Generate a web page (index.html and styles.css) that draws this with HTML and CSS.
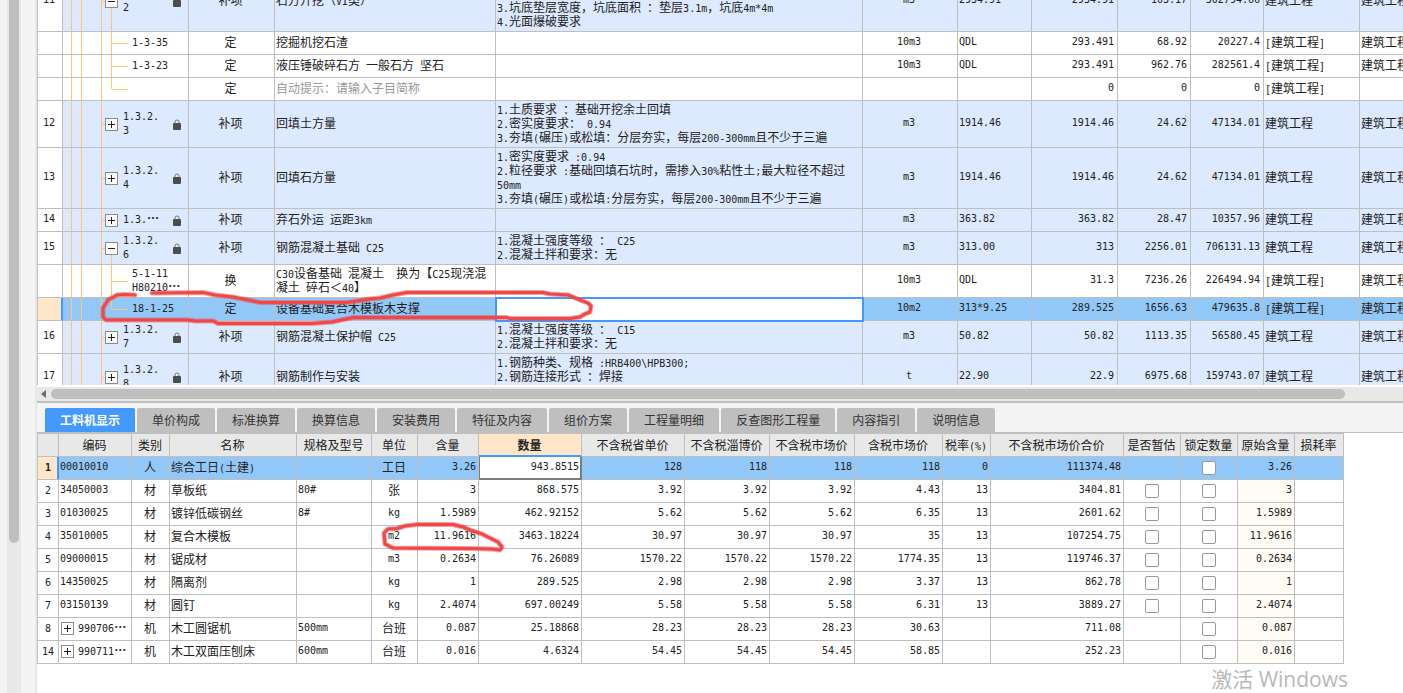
FILE: index.html
```html
<!DOCTYPE html>
<html lang="zh-CN">
<head>
<meta charset="utf-8">
<title>工程量清单计价</title>
<link rel="stylesheet" href="styles.css">
</head>
<body>
<svg class="defs" width="0" height="0" aria-hidden="true">
  <symbol id="lock" viewBox="0 0 8 11"><path d="M2 5V3a2 2 0 0 1 4 0v2" fill="none" stroke="#777" stroke-width="1"/><rect x="0" y="4" width="8" height="7" rx="1" fill="#4d4d4d"/></symbol>
  <symbol id="plus" viewBox="0 0 13 13"><rect x="0.5" y="0.5" width="12" height="12" fill="#fff" stroke="#8c8c8c"/><path d="M3 6.5h7M6.5 3v7" stroke="#222" fill="none"/></symbol>
  <symbol id="minus" viewBox="0 0 13 13"><rect x="0.5" y="0.5" width="12" height="12" fill="#fff" stroke="#8c8c8c"/><path d="M3 6.5h7" stroke="#222" fill="none"/></symbol>
</svg>
<div class="app">
  <aside class="gutter"><div class="vtrack"><div class="vthumb"></div></div></aside>
  <main class="main">
    <section class="bill">
      <table class="grid bill-grid">
        <colgroup><col class="b1"><col class="b2"><col class="b3"><col class="b4"><col class="b5"><col class="b6"><col class="b7"><col class="b8"><col class="b9"><col class="b10"><col class="b11"><col class="b12"></colgroup>
        <tbody>
        <tr class="item">
          <td class="idx n">11</td>
          <td class="tree open"><div class="node"><button class="tog" aria-label="收起"><svg><use href="#minus"/></svg></button><span class="code n">1.3.2.<br>2</span><svg class="lock"><use href="#lock"/></svg></div></td>
          <td class="c">补项</td><td>石方开挖（<span class="n">VI</span>类）</td>
          <td><br><br><span class="n">3.</span>坑底垫层宽度，坑底面积<span class="n"> </span>：垫层<span class="n">3.1m</span>，坑底<span class="n">4m*4m</span><br><span class="n">4.</span>光面爆破要求</td>
          <td class="c n">m3</td><td class="n">2934.91</td><td class="r n">2934.91</td><td class="r n">103.17</td><td class="r n">302794.66</td><td>建筑工程</td><td>建筑工程</td>
        </tr>
        <tr>
          <td class="idx n"></td><td class="tree child"><div class="leaf n">1-3-35</div></td>
          <td class="c">定</td><td>挖掘机挖石渣</td><td></td>
          <td class="c n">10m3</td><td class="n">QDL</td><td class="r n">293.491</td><td class="r n">68.92</td><td class="r n">20227.4</td><td><span class="n">[</span>建筑工程<span class="n">]</span></td><td>建筑工程</td>
        </tr>
        <tr>
          <td class="idx n"></td><td class="tree child"><div class="leaf n">1-3-23</div></td>
          <td class="c">定</td><td>液压锤破碎石方<span class="n"> </span>一般石方<span class="n"> </span>坚石</td><td></td>
          <td class="c n">10m3</td><td class="n">QDL</td><td class="r n">293.491</td><td class="r n">962.76</td><td class="r n">282561.4</td><td><span class="n">[</span>建筑工程<span class="n">]</span></td><td>建筑工程</td>
        </tr>
        <tr>
          <td class="idx n"></td><td class="tree child last"></td>
          <td class="c">定</td><td class="hint">自动提示：请输入子目简称</td><td></td>
          <td></td><td></td><td class="r n">0</td><td class="r n">0</td><td class="r n">0</td><td><span class="n">[</span>建筑工程<span class="n">]</span></td><td></td>
        </tr>
        <tr class="item">
          <td class="idx n">12</td>
          <td class="tree"><div class="node"><button class="tog" aria-label="展开"><svg><use href="#plus"/></svg></button><span class="code n">1.3.2.<br>3</span><svg class="lock"><use href="#lock"/></svg></div></td>
          <td class="c">补项</td><td>回填土方量</td>
          <td><span class="n">1.</span>土质要求<span class="n"> </span>：基础开挖余土回填<br><span class="n">2.</span>密实度要求：<span class="n"> 0.94</span><br><span class="n">3.</span>夯填<span class="n">(</span>碾压<span class="n">)</span>或松填：分层夯实，每层<span class="n">200-300mm</span>且不少于三遍</td>
          <td class="c n">m3</td><td class="n">1914.46</td><td class="r n">1914.46</td><td class="r n">24.62</td><td class="r n">47134.01</td><td>建筑工程</td><td>建筑工程</td>
        </tr>
        <tr class="item">
          <td class="idx n">13</td>
          <td class="tree"><div class="node"><button class="tog" aria-label="展开"><svg><use href="#plus"/></svg></button><span class="code n">1.3.2.<br>4</span><svg class="lock"><use href="#lock"/></svg></div></td>
          <td class="c">补项</td><td>回填石方量</td>
          <td><span class="n">1.</span>密实度要求<span class="n"> :0.94</span><br><span class="n">2.</span>粒径要求<span class="n"> :</span>基础回填石坑时，需掺入<span class="n">30%</span>粘性土<span class="n">;</span>最大粒径不超过<br><span class="n">50mm</span><br><span class="n">3.</span>夯填<span class="n">(</span>碾压<span class="n">)</span>或松填<span class="n">:</span>分层夯实，每层<span class="n">200-300mm</span>且不少于三遍</td>
          <td class="c n">m3</td><td class="n">1914.46</td><td class="r n">1914.46</td><td class="r n">24.62</td><td class="r n">47134.01</td><td>建筑工程</td><td>建筑工程</td>
        </tr>
        <tr class="item">
          <td class="idx n">14</td>
          <td class="tree"><div class="node"><button class="tog" aria-label="展开"><svg><use href="#plus"/></svg></button><span class="code n">1.3.<b class="dots">…</b></span><svg class="lock"><use href="#lock"/></svg></div></td>
          <td class="c">补项</td><td>弃石外运<span class="n"> </span>运距<span class="n">3km</span></td><td></td>
          <td class="c n">m3</td><td class="n">363.82</td><td class="r n">363.82</td><td class="r n">28.47</td><td class="r n">10357.96</td><td>建筑工程</td><td>建筑工程</td>
        </tr>
        <tr class="item">
          <td class="idx n">15</td>
          <td class="tree open"><div class="node"><button class="tog" aria-label="收起"><svg><use href="#minus"/></svg></button><span class="code n">1.3.2.<br>6</span><svg class="lock"><use href="#lock"/></svg></div></td>
          <td class="c">补项</td><td>钢筋混凝土基础<span class="n"> C25</span></td>
          <td><span class="n">1.</span>混凝土强度等级<span class="n"> </span>：<span class="n"> C25</span><br><span class="n">2.</span>混凝土拌和要求：无</td>
          <td class="c n">m3</td><td class="n">313.00</td><td class="r n">313</td><td class="r n">2256.01</td><td class="r n">706131.13</td><td>建筑工程</td><td>建筑工程</td>
        </tr>
        <tr>
          <td class="idx n"></td><td class="tree child"><div class="leaf n">5-1-11<br>H80210<b class="dots">…</b></div></td>
          <td class="c">换</td><td><span class="n">C30</span>设备基础<span class="n"> </span>混凝土<span class="n">&nbsp; </span>换为【<span class="n">C25</span>现浇混<br>凝土<span class="n"> </span>碎石＜<span class="n">40</span>】</td><td></td>
          <td class="c n">10m3</td><td class="n">QDL</td><td class="r n">31.3</td><td class="r n">7236.26</td><td class="r n">226494.94</td><td><span class="n">[</span>建筑工程<span class="n">]</span></td><td>建筑工程</td>
        </tr>
        <tr class="sel">
          <td class="idx n"></td><td class="tree child last"><div class="leaf n">18-1-25</div></td>
          <td class="c">定</td><td>设备基础复合木模板木支撑</td><td class="edit"><input class="cell-input" type="text" aria-label="项目特征"></td>
          <td class="c n">10m2</td><td class="n">313*9.25</td><td class="r n">289.525</td><td class="r n">1656.63</td><td class="r n">479635.8</td><td><span class="n">[</span>建筑工程<span class="n">]</span></td><td>建筑工程</td>
        </tr>
        <tr class="item">
          <td class="idx n">16</td>
          <td class="tree"><div class="node"><button class="tog" aria-label="展开"><svg><use href="#plus"/></svg></button><span class="code n">1.3.2.<br>7</span><svg class="lock"><use href="#lock"/></svg></div></td>
          <td class="c">补项</td><td>钢筋混凝土保护帽<span class="n"> C25</span></td>
          <td><span class="n">1.</span>混凝土强度等级<span class="n"> </span>：<span class="n"> C15</span><br><span class="n">2.</span>混凝土拌和要求：无</td>
          <td class="c n">m3</td><td class="n">50.82</td><td class="r n">50.82</td><td class="r n">1113.35</td><td class="r n">56580.45</td><td>建筑工程</td><td>建筑工程</td>
        </tr>
        <tr class="item">
          <td class="idx n">17</td>
          <td class="tree"><div class="node"><button class="tog" aria-label="展开"><svg><use href="#plus"/></svg></button><span class="code n">1.3.2.<br>8</span><svg class="lock"><use href="#lock"/></svg></div></td>
          <td class="c">补项</td><td>钢筋制作与安装</td>
          <td><span class="n">1.</span>钢筋种类、规格<span class="n"> :HRB400\HPB300;</span><br><span class="n">2.</span>钢筋连接形式<span class="n"> </span>：焊接<br>&nbsp;</td>
          <td class="c n">t</td><td class="n">22.90</td><td class="r n">22.9</td><td class="r n">6975.68</td><td class="r n">159743.07</td><td>建筑工程</td><td>建筑工程</td>
        </tr>
        </tbody>
      </table>
    </section>
    <div class="htrack"><svg class="arrow" viewBox="0 0 5 8"><path d="M5 0v8L0 4z" fill="#6b6b75"/></svg><div class="hthumb"></div></div>
    <section class="detail">
      <nav class="tabs">
        <button class="tab active">工料机显示</button><button class="tab">单价构成</button><button class="tab">标准换算</button><button class="tab">换算信息</button><button class="tab">安装费用</button><button class="tab">特征及内容</button><button class="tab">组价方案</button><button class="tab">工程量明细</button><button class="tab">反查图形工程量</button><button class="tab">内容指引</button><button class="tab">说明信息</button>
      </nav>
      <table class="grid detail-grid">
        <colgroup><col class="d1"><col class="d2"><col class="d3"><col class="d4"><col class="d5"><col class="d6"><col class="d7"><col class="d8"><col class="d9"><col class="d10"><col class="d11"><col class="d12"><col class="d13"><col class="d14"><col class="d15"><col class="d16"><col class="d17"><col class="d18"></colgroup>
        <thead><tr><th></th><th>编码</th><th>类别</th><th>名称</th><th>规格及型号</th><th>单位</th><th>含量</th><th class="hot">数量</th><th>不含税省单价</th><th>不含税淄博价</th><th>不含税市场价</th><th>含税市场价</th><th>税率<span class="n">(%)</span></th><th>不含税市场价合价</th><th>是否暂估</th><th>锁定数量</th><th>原始含量</th><th>损耗率</th></tr></thead>
        <tbody>
        <tr class="sel"><td class="idx n">1</td><td class="n">00010010</td><td class="c">人</td><td>综合工日<span class="n">(</span>土建<span class="n">)</span></td><td></td><td class="c">工日</td><td class="r n">3.26</td><td class="r n focus">943.8515</td><td class="r n">128</td><td class="r n">118</td><td class="r n">118</td><td class="r n">118</td><td class="r n">0</td><td class="r n">111374.48</td><td></td><td class="c"><input type="checkbox" aria-label="锁定数量"></td><td class="r n">3.26</td><td></td></tr>
        <tr><td class="idx n">2</td><td class="n">34050003</td><td class="c">材</td><td>草板纸</td><td class="n">80#</td><td class="c">张</td><td class="r n">3</td><td class="r n">868.575</td><td class="r n">3.92</td><td class="r n">3.92</td><td class="r n">3.92</td><td class="r n">4.43</td><td class="r n">13</td><td class="r n">3404.81</td><td class="c"><input type="checkbox" aria-label="是否暂估"></td><td class="c"><input type="checkbox" aria-label="锁定数量"></td><td class="r n orig">3</td><td></td></tr>
        <tr><td class="idx n">3</td><td class="n">01030025</td><td class="c">材</td><td>镀锌低碳钢丝</td><td class="n">8#</td><td class="c n">kg</td><td class="r n">1.5989</td><td class="r n">462.92152</td><td class="r n">5.62</td><td class="r n">5.62</td><td class="r n">5.62</td><td class="r n">6.35</td><td class="r n">13</td><td class="r n">2601.62</td><td class="c"><input type="checkbox" aria-label="是否暂估"></td><td class="c"><input type="checkbox" aria-label="锁定数量"></td><td class="r n orig">1.5989</td><td></td></tr>
        <tr><td class="idx n">4</td><td class="n">35010005</td><td class="c">材</td><td>复合木模板</td><td></td><td class="c n">m2</td><td class="r n">11.9616</td><td class="r n">3463.18224</td><td class="r n">30.97</td><td class="r n">30.97</td><td class="r n">30.97</td><td class="r n">35</td><td class="r n">13</td><td class="r n">107254.75</td><td class="c"><input type="checkbox" aria-label="是否暂估"></td><td class="c"><input type="checkbox" aria-label="锁定数量"></td><td class="r n orig">11.9616</td><td></td></tr>
        <tr><td class="idx n">5</td><td class="n">09000015</td><td class="c">材</td><td>锯成材</td><td></td><td class="c n">m3</td><td class="r n">0.2634</td><td class="r n">76.26089</td><td class="r n">1570.22</td><td class="r n">1570.22</td><td class="r n">1570.22</td><td class="r n">1774.35</td><td class="r n">13</td><td class="r n">119746.37</td><td class="c"><input type="checkbox" aria-label="是否暂估"></td><td class="c"><input type="checkbox" aria-label="锁定数量"></td><td class="r n orig">0.2634</td><td></td></tr>
        <tr><td class="idx n">6</td><td class="n">14350025</td><td class="c">材</td><td>隔离剂</td><td></td><td class="c n">kg</td><td class="r n">1</td><td class="r n">289.525</td><td class="r n">2.98</td><td class="r n">2.98</td><td class="r n">2.98</td><td class="r n">3.37</td><td class="r n">13</td><td class="r n">862.78</td><td class="c"><input type="checkbox" aria-label="是否暂估"></td><td class="c"><input type="checkbox" aria-label="锁定数量"></td><td class="r n orig">1</td><td></td></tr>
        <tr><td class="idx n">7</td><td class="n">03150139</td><td class="c">材</td><td>圆钉</td><td></td><td class="c n">kg</td><td class="r n">2.4074</td><td class="r n">697.00249</td><td class="r n">5.58</td><td class="r n">5.58</td><td class="r n">5.58</td><td class="r n">6.31</td><td class="r n">13</td><td class="r n">3889.27</td><td class="c"><input type="checkbox" aria-label="是否暂估"></td><td class="c"><input type="checkbox" aria-label="锁定数量"></td><td class="r n orig">2.4074</td><td></td></tr>
        <tr><td class="idx n">8</td><td class="n"><div class="group"><button class="tog" aria-label="展开"><svg><use href="#plus"/></svg></button><span>990706<b class="dots">…</b></span></div></td><td class="c">机</td><td>木工圆锯机</td><td class="n">500mm</td><td class="c">台班</td><td class="r n">0.087</td><td class="r n">25.18868</td><td class="r n">28.23</td><td class="r n">28.23</td><td class="r n">28.23</td><td class="r n">30.63</td><td></td><td class="r n">711.08</td><td></td><td class="c"><input type="checkbox" aria-label="锁定数量"></td><td class="r n orig">0.087</td><td></td></tr>
        <tr><td class="idx n">14</td><td class="n"><div class="group"><button class="tog" aria-label="展开"><svg><use href="#plus"/></svg></button><span>990711<b class="dots">…</b></span></div></td><td class="c">机</td><td>木工双面压刨床</td><td class="n">600mm</td><td class="c">台班</td><td class="r n">0.016</td><td class="r n">4.6324</td><td class="r n">54.45</td><td class="r n">54.45</td><td class="r n">54.45</td><td class="r n">58.85</td><td></td><td class="r n">252.23</td><td></td><td class="c"><input type="checkbox" aria-label="锁定数量"></td><td class="r n orig">0.016</td><td></td></tr>
        </tbody>
      </table>
    </section>
  </main>
  <svg class="marks" width="620" height="560" viewBox="0 0 620 560" aria-hidden="true">
    <g id="ink" fill="none" stroke-linecap="round" stroke-linejoin="round">
      <path class="halo" d="M135 295L125 294.500L117 295L108 300L103 308L103 317L106 320L188 320L195 321L213 321L218 323.500L312 323.500L332 322L353 317.500L507 317.500L510 318.500L570 318.500L580 317L585 314L590 312L591 306L588 303L580 300L568 295L550 294L543 292.500L407 292.500L393 295L380 298L370 299L347 302.500L260 302.500L248 300L233 297L215 295L203 292.500L152 293M388 529L397 528.500L405 526L417 524.500L453 524.500L463 527L470 530L482 534L498 542L502 547L500 550L492 549L470 548.500L393 548L385 544L384 533Z"/>
      <path class="core" d="M135 295L125 294.500L117 295L108 300L103 308L103 317L106 320L188 320L195 321L213 321L218 323.500L312 323.500L332 322L353 317.500L507 317.500L510 318.500L570 318.500L580 317L585 314L590 312L591 306L588 303L580 300L568 295L550 294L543 292.500L407 292.500L393 295L380 298L370 299L347 302.500L260 302.500L248 300L233 297L215 295L203 292.500L152 293M388 529L397 528.500L405 526L417 524.500L453 524.500L463 527L470 530L482 534L498 542L502 547L500 550L492 549L470 548.500L393 548L385 544L384 533Z"/>
    </g>
  </svg>
  <div class="watermark">激活 Windows</div>
</div>
</body>
</html>
```
FILE: styles.css
```css
* { box-sizing: border-box; }
html, body { height: 100%; }
body {
  margin: 0;
  overflow: hidden;
  background: #f4f4f4;
  color: #222;
  font: 12px/14px "Noto Sans CJK SC", sans-serif;
}
.defs { position: absolute; }
.app { position: relative; display: flex; height: 100%; overflow: hidden; }

.gutter { flex: 0 0 37px; padding-left: 7px; border-right: 2px solid #e8e8e8; }
.vtrack { width: 14px; height: 100%; padding: 0 2px; background: #e8e8e8; }
.vthumb { height: 543px; max-height: 90%; background: #bfbfbf; border-radius: 0 0 5px 5px; }

.main { flex: 1; min-width: 0; display: flex; flex-direction: column; }
.bill { flex: 1; min-height: 0; overflow: hidden; background: #fff; }

.grid { table-layout: fixed; border-collapse: separate; border-spacing: 0; border-left: 1px solid #bfbfbf; background: #fff; }
.grid tr { height: 23px; }
.grid td, .grid th {
  padding: 1px 3px 3px 1px;
  border-right: 1px solid #bfbfbf;
  border-bottom: 1px solid #bfbfbf;
  overflow: hidden;
  white-space: nowrap;
  text-align: left;
  font-weight: 400;
}
.grid .c, .grid .idx, .grid th { text-align: center; }
.grid .r { text-align: right; }
.n { font-family: "DejaVu Sans Mono", "Noto Sans CJK SC", monospace; font-size: 10px; line-height: 10px; }
span.n { white-space: pre-wrap; }
.hint { color: #999; }

/* scrolled part-way into row 11 */
.bill-grid { width: 1403px; margin-top: -29px; }
.b1 { width: 25px; } .b2 { width: 126px; } .b3 { width: 86px; } .b4 { width: 221px; }
.b5 { width: 367px; } .b6 { width: 95px; } .b7 { width: 74px; } .b8 { width: 86px; }
.b9 { width: 73px; } .b10 { width: 73px; } .b11 { width: 96px; } .b12 { width: 80px; }
.item td { background-color: #dde9fe; }
.item .idx { background: #fff; }
.sel td { background-color: #92c8f7; }
.sel .idx { background: #ffe6c8; border-right-color: #4499ff; box-shadow: inset -1px 0 #4499ff; }
.detail-grid .sel .idx { font-weight: 700; }

.grid .tree {
  --line: linear-gradient(#fdc67c, #fdc67c);
  padding: 0;
  background-image: var(--line), var(--line), var(--line), var(--line);
  background-repeat: no-repeat;
  background-position: 8px 0, 18px 0, 38px 0, 39px 50%;
  background-size: 1px 100%, 1px 100%, 1px 100%, 3px 1px;
}
.grid .tree.open {
  background-image: var(--line), var(--line), var(--line), var(--line), var(--line);
  background-position: 8px 0, 18px 0, 38px 0, 39px 50%, 48px 100%;
  background-size: 1px 100%, 1px 100%, 1px 100%, 3px 1px, 1px 50%;
}
.grid .tree.child {
  background-image: var(--line), var(--line), var(--line), var(--line), var(--line);
  background-position: 8px 0, 18px 0, 38px 0, 49px 50%, 48px 0;
  background-size: 1px 100%, 1px 100%, 1px 100%, 16px 1px, 1px 100%;
}
.grid .tree.last { background-size: 1px 100%, 1px 100%, 1px 100%, 16px 1px, 1px 50%; }
.node { display: flex; align-items: center; gap: 5px; padding: 0 7px 0 42px; }
.code { flex: 1; line-height: 14px; }
.leaf { padding-left: 69px; line-height: 14px; }
.tog { flex: none; width: 13px; height: 13px; padding: 0; border: 0; background: none; }
.tog svg { display: block; width: 13px; height: 13px; }
.lock { width: 8px; height: 11px; }
.dots { font: 700 12px/10px "Noto Sans CJK SC", sans-serif; }
.grid .edit { padding: 0 2px; background: #fff; outline: 2px solid #4499ff; outline-offset: -1px; }
.cell-input { display: block; width: 100%; height: 14px; padding: 0; border: 0; outline: 0; background: none; font: inherit; }

.htrack {
  display: flex;
  align-items: center;
  gap: 5px;
  height: 16px;
  padding: 0 58px 0 4px;
  background: #e8e8e8;
  border-top: 2px solid #fff;
}
.arrow { width: 5px; height: 8px; }
.hthumb { flex: 1; height: 10px; background: #bfbfbf; border-radius: 5px; }

.detail { flex: 0 0 292px; background: #fff; overflow: hidden; }
.tabs {
  display: flex;
  gap: 2px;
  height: 32px;
  padding: 5px 8px 0;
  background: #f4f4f4;
  border-top: 2px solid #bfbfbf;
  border-bottom: 1px solid #bfbfbf;
}
.tab {
  padding: 0 15px;
  border: 0;
  border-radius: 2px 2px 0 0;
  background: #bfbfbf;
  color: #333;
  font: inherit;
  white-space: nowrap;
}
.tab.active { background: #4499ff; color: #fff; font-weight: 700; }

.detail-grid { width: 1307px; border-top: 1px solid #bfbfbf; }
.d1 { width: 21px; } .d2 { width: 73px; } .d3 { width: 38px; } .d4 { width: 127px; }
.d5 { width: 75px; } .d6 { width: 46px; } .d7 { width: 61px; } .d8 { width: 103px; }
.d9 { width: 103px; } .d10 { width: 85px; } .d11 { width: 85px; } .d12 { width: 88px; }
.d13 { width: 48px; } .d14 { width: 133px; } .d15 { width: 57px; } .d16 { width: 57px; }
.d17 { width: 57px; } .d18 { width: 49px; }
.detail-grid th { padding: 1px 2px 2px 1px; background: #e8e8e8; }
.detail-grid .hot { background: #ffe6c8; font-weight: 700; border-bottom-color: #4499ff; box-shadow: inset 0 -1px #4499ff; }
.detail-grid td { padding: 0 2px 2px 1px; }
.detail-grid .idx { padding: 0; }
.detail-grid .focus { background: #fff; border-color: #7d7d7d; box-shadow: inset 1px 0 #7d7d7d, inset -1px -1px #7d7d7d; }
.orig { background: #fffbf5; }
.group { display: flex; align-items: center; gap: 4px; padding-left: 1px; }
input[type="checkbox"] {
  appearance: none;
  display: block;
  width: 14px;
  height: 14px;
  margin: 2px auto 0;
  border: 1px solid #999;
  border-radius: 2px;
  background: #fff;
}

.marks { position: absolute; left: 0; top: 0; pointer-events: none; }
.halo { stroke: #f04a4a; stroke-opacity: 0.5; stroke-width: 5; }
.core { stroke: #ee4848; stroke-width: 3; }
.watermark {
  position: absolute;
  right: 55px;
  bottom: 0;
  color: #b9b9b9;
  font: 21px/28px "Open Sans", "Noto Sans CJK SC", sans-serif;
}
```
